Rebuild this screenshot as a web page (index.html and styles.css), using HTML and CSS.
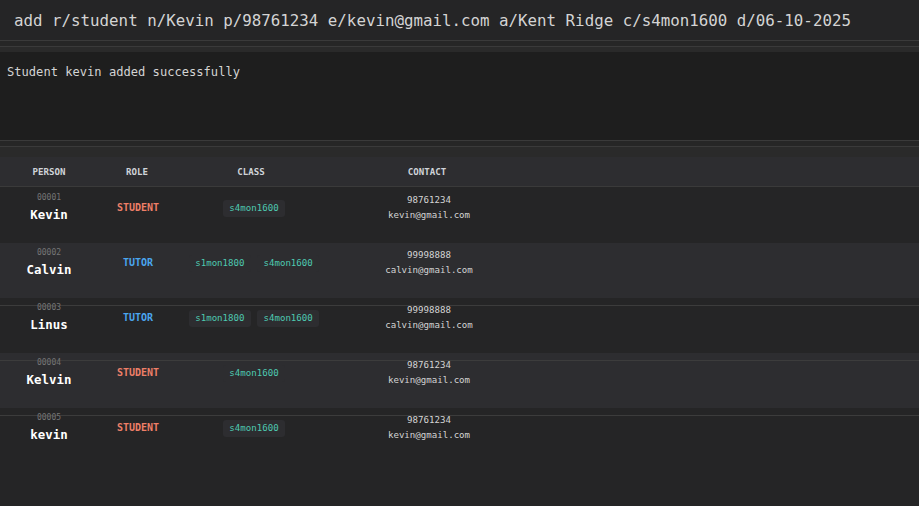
FILE: index.html
```html
<!DOCTYPE html>
<html>
<head>
<meta charset="utf-8">
<link rel="stylesheet" href="styles.css">
</head>
<body>
<div class="command">add r/student n/Kevin p/98761234 e/kevin@gmail.com a/Kent Ridge c/s4mon1600 d/06-10-2025</div>
<div class="split"></div>
<div class="message">Student kevin added successfully</div>
<div class="split split-tall"></div>
<div class="table">
  <div class="header">
    <div class="hcell">PERSON</div>
    <div class="hcell">ROLE</div>
    <div class="hcell">CLASS</div>
    <div class="hcell">CONTACT</div>
  </div>
  <div class="row row-dark row-first">
    <div class="person"><div class="pid">00001</div><div class="pname">Kevin</div></div>
    <div class="role student">STUDENT</div>
    <div class="classes"><span class="chip">s4mon1600</span></div>
    <div class="contact"><div class="phone">98761234</div><div class="email">kevin@gmail.com</div></div>
  </div>
  <div class="row row-light">
    <div class="person"><div class="pid">00002</div><div class="pname">Calvin</div></div>
    <div class="role tutor">TUTOR</div>
    <div class="classes"><span class="chip">s1mon1800</span><span class="chip">s4mon1600</span></div>
    <div class="contact"><div class="phone">99998888</div><div class="email">calvin@gmail.com</div></div>
  </div>
  <div class="row row-dark row-lined">
    <div class="person"><div class="pid">00003</div><div class="pname">Linus</div></div>
    <div class="role tutor">TUTOR</div>
    <div class="classes"><span class="chip">s1mon1800</span><span class="chip">s4mon1600</span></div>
    <div class="contact"><div class="phone">99998888</div><div class="email">calvin@gmail.com</div></div>
  </div>
  <div class="row row-light row-lined">
    <div class="person"><div class="pid">00004</div><div class="pname">Kelvin</div></div>
    <div class="role student">STUDENT</div>
    <div class="classes"><span class="chip">s4mon1600</span></div>
    <div class="contact"><div class="phone">98761234</div><div class="email">kevin@gmail.com</div></div>
  </div>
  <div class="row row-dark row-lined row-last">
    <div class="person"><div class="pid">00005</div><div class="pname">kevin</div></div>
    <div class="role student">STUDENT</div>
    <div class="classes"><span class="chip">s4mon1600</span></div>
    <div class="contact"><div class="phone">98761234</div><div class="email">kevin@gmail.com</div></div>
  </div>
</div>
</body>
</html>
```

FILE: styles.css
```css
html, body {
  margin: 0;
  padding: 0;
  height: 100%;
}
body {
  background: #252526;
  font-family: "DejaVu Sans Mono", "Liberation Mono", monospace;
  color: #d4d4d4;
  display: flex;
  flex-direction: column;
  overflow: hidden;
}
.command {
  height: 40px;
  padding-left: 14px;
  display: flex;
  align-items: center;
  font-size: 15.8px;
  color: #d4d4d4;
  background: #252526;
  white-space: nowrap;
  box-sizing: border-box;
  padding-top: 1px;
}
.split {
  border-top: 1px solid #3a3a3a;
  height: 11px;
  background: linear-gradient(to bottom, #262626 0, #262626 5px, #3a3a3a 5px, #3a3a3a 6px, #2a2a2a 6px);
}
.split-tall {
  height: 16px;
}
.message {
  height: 88px;
  background: #1e1e1e;
  padding: 12px 0 0 7px;
  box-sizing: border-box;
  font-size: 12.1px;
  line-height: 16px;
  color: #d4d4d4;
}
.table {
  flex: 1;
  display: flex;
  flex-direction: column;
}
.header {
  height: 29px;
  background: #2d2d30;
  border-bottom: 1px solid #3a3a3a;
  display: grid;
  grid-template-columns: 98px 78px 150px 202px 1fr;
  align-items: center;
}
.hcell {
  text-align: center;
  font-size: 9.1px;
  font-weight: bold;
  color: #cfd3d8;
}
.row {
  height: 55px;
  display: grid;
  grid-template-columns: 98px 80px 152px 198px 1fr;
  align-items: start;
  box-sizing: border-box;
}
.row-first {
  height: 56px;
  padding-top: 1px;
}
.row-last {
  flex: 1;
}
.row-dark {
  background-color: #252526;
}
.row-light {
  background-color: #2d2d30;
}
.row-dark.row-lined {
  background: linear-gradient(to bottom, transparent 7px, #3c3c3c 7px, #3c3c3c 8px, transparent 8px) no-repeat, #252526;
  background-size: 100% 55px;
}
.row-light.row-lined {
  background: linear-gradient(to bottom, transparent 7px, #3c3c3c 7px, #3c3c3c 8px, transparent 8px) no-repeat, #2d2d30;
  background-size: 100% 55px;
}
.person {
  display: flex;
  flex-direction: column;
  align-items: center;
  padding-top: 5px;
}
.pid {
  font-size: 8px;
  line-height: 10px;
  color: #767676;
}
.pname {
  margin-top: 3px;
  font-size: 12.4px;
  line-height: 18px;
  font-weight: bold;
  color: #ffffff;
}
.role {
  text-align: center;
  padding-top: 14px;
  font-size: 10px;
  line-height: 12px;
  font-weight: bold;
}
.student {
  color: #ee7f68;
}
.tutor {
  color: #4aa6ef;
}
.classes {
  display: flex;
  justify-content: center;
  gap: 6px;
  padding-top: 12px;
}
.chip {
  height: 17px;
  line-height: 17px;
  padding: 0 6.5px;
  border-radius: 3px;
  background: #2d2d30;
  color: #4ec9b0;
  font-size: 9.1px;
}
.contact {
  display: flex;
  flex-direction: column;
  align-items: center;
  padding-top: 6px;
  font-size: 9.1px;
  color: #d4d4d4;
}
.phone {
  line-height: 12px;
}
.email {
  margin-top: 2px;
  line-height: 14px;
}
```
